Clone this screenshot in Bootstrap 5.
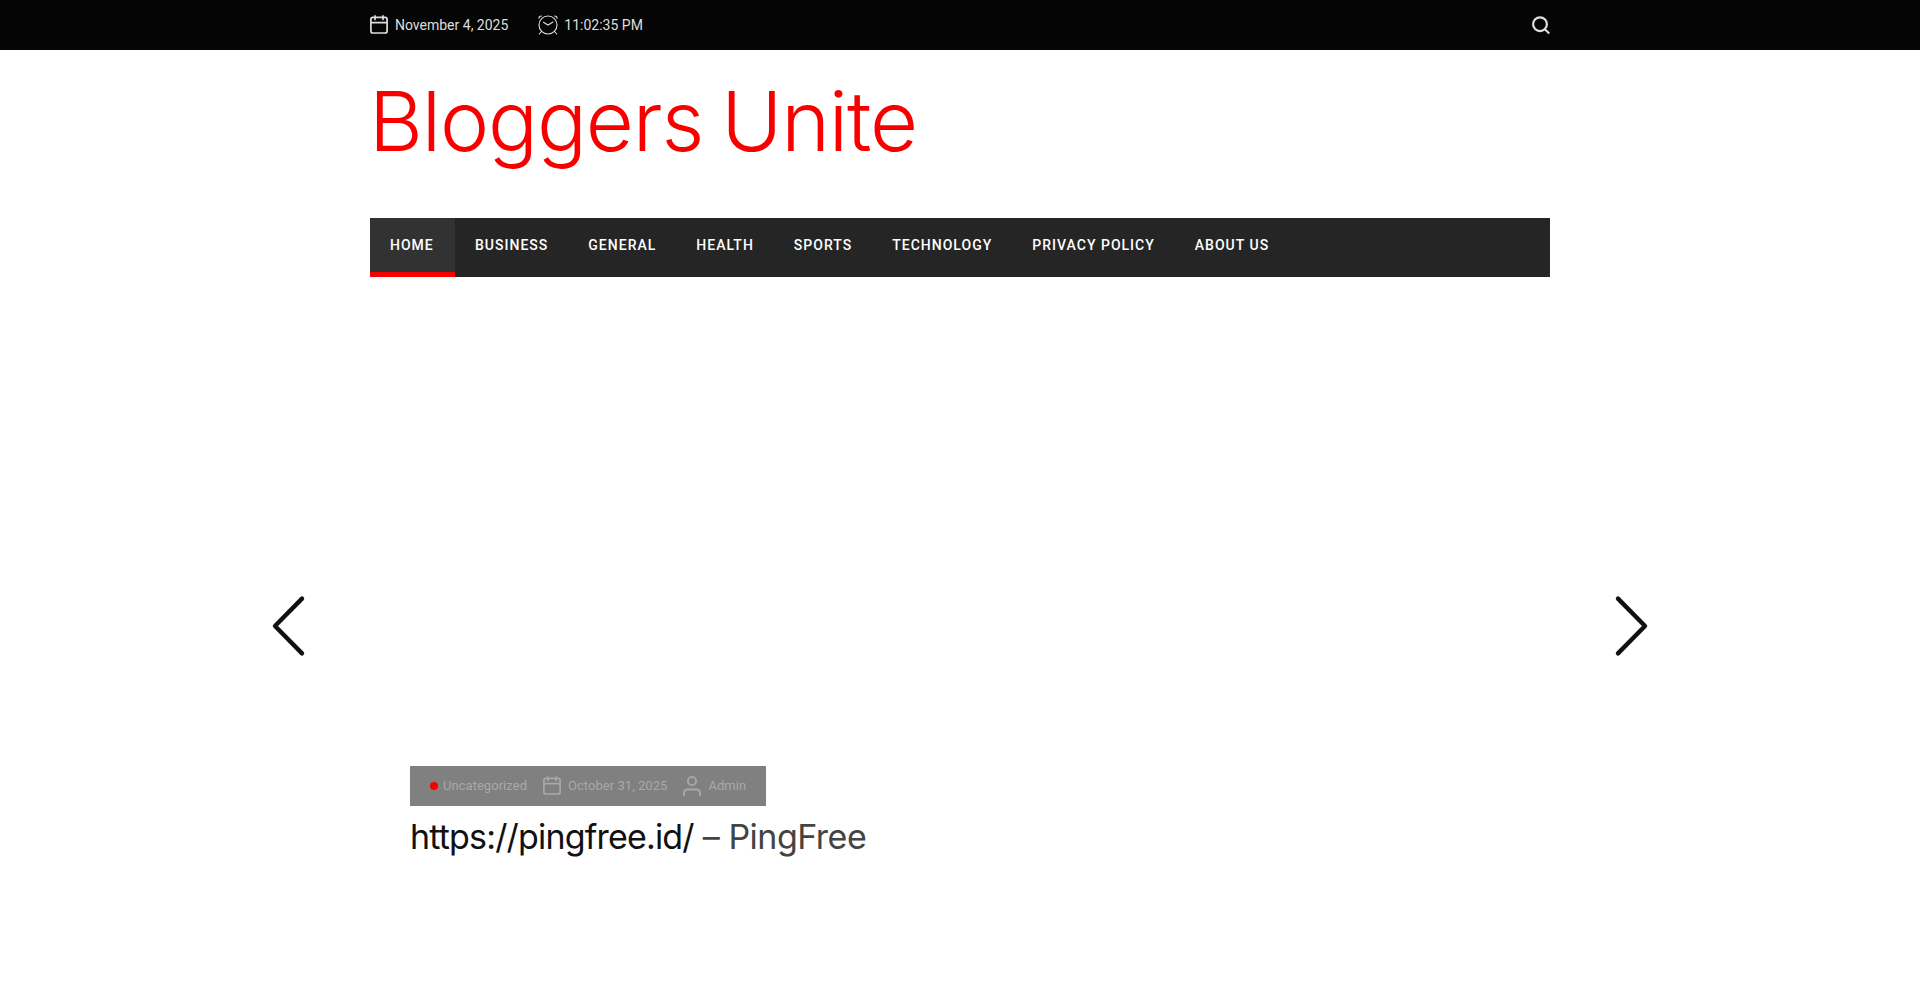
<!DOCTYPE html>
<html lang="en">
<head>
<meta charset="utf-8">
<meta name="viewport" content="width=device-width, initial-scale=1">
<title>Bloggers Unite</title>
<link href="https://cdn.jsdelivr.net/npm/bootstrap@5.3.0/dist/css/bootstrap.min.css" rel="stylesheet">
<style>
body{font-family:Roboto,sans-serif;background:#fff;color:#111;overflow:hidden}
.wrap{width:1180px;margin:0 auto}
.topbar{height:50px;background:#050505;color:#dedede;font-size:14px}
.topbar svg,.meta svg{display:block;flex:none}
.date{margin-left:7px}
.clock{margin-left:30px}
.time{margin-left:6px}
.masthead{height:168px;padding-top:14px}
.site-title{font-family:Inter,sans-serif;font-weight:300;font-size:83px;line-height:115px;letter-spacing:-1.15px;word-spacing:-4px;color:#f80000;margin:0 0 0 -1px;white-space:nowrap}
.mainnav{height:59px;background:#252525}
.mainnav .nav-link{padding:0 20px;height:59px;line-height:54px;color:#fff;font-size:14px;font-weight:500;letter-spacing:1.01px;text-transform:uppercase;white-space:nowrap}
.mainnav .active{background:#323232;border-bottom:5px solid #f80000;width:85px}
.slider{width:1380px;margin:0 auto;height:700px}
.arrow{margin-top:317px;padding:0;border:0;background:none;height:64px}
.arrow svg{display:block}
.slide{width:1180px;padding:489px 40px 0}
.meta{width:356px;height:40px;background:#808080;color:#a8a8a8;font-size:13px;padding-left:20px;white-space:nowrap;letter-spacing:.04px}
.dot{width:8px;height:8px;background:#f80000}
.cat{margin-left:5px}
.cal,.user{margin-left:16px}
.posted,.author{margin-left:7px}
.post-title{font-family:Inter,sans-serif;font-size:34px;font-weight:400;line-height:40px;margin:11px 0 0;color:#444;white-space:nowrap;letter-spacing:-.5px}
.post-title a{color:#111;letter-spacing:-.82px}
</style>
</head>
<body>
<header>
<div class="topbar">
 <div class="wrap h-100 d-flex align-items-center">
  <svg width="18" height="20" viewBox="0 0 18 20" fill="none" stroke="currentColor" stroke-width="1.7" stroke-linecap="round"><rect x=".9" y="2.4" width="16.2" height="15.6" rx="2"/><path d="M1 7.6h16M5 .9v3.6M13 .9v3.6"/></svg>
  <span class="date">November 4, 2025</span>
  <svg class="clock" width="20" height="20" viewBox="0 0 20 20" fill="none" stroke="currentColor" stroke-width="1.1" stroke-linecap="round"><circle cx="10" cy="10" r="9"/><path d="M5.5 7.3 10 10l5-3M1 3.2C1 1.8 2 1 3.3 1M19 3.2C19 1.8 18 1 16.7 1M3.5 16.5 1.2 19M16.5 16.5l2.3 2.5"/></svg>
  <span class="time">11:02:35 PM</span>
  <svg class="ms-auto" width="18" height="19" viewBox="0 0 18 19" fill="none" stroke="currentColor" stroke-width="2.2"><circle cx="8" cy="8.2" r="6.9"/><path d="m12.8 13.2 4.5 4.3"/></svg>
 </div>
</div>
<div class="wrap masthead"><h1 class="site-title">Bloggers Unite</h1></div>
<nav class="wrap mainnav nav flex-nowrap">
 <a class="nav-link active" href="#">Home</a><a class="nav-link" href="#">Business</a><a class="nav-link" href="#">General</a><a class="nav-link" href="#">Health</a><a class="nav-link" href="#">Sports</a><a class="nav-link" href="#">Technology</a><a class="nav-link" href="#">Privacy Policy</a><a class="nav-link" href="#">About Us</a>
</nav>
</header>
<main class="slider d-flex justify-content-between align-items-start">
 <button class="arrow" aria-label="Previous"><svg width="36" height="64" viewBox="0 0 36 64" fill="none" stroke="#111" stroke-width="4.4" stroke-linecap="round" stroke-linejoin="round"><path d="M32 4.600 5 32l27 27.400"/></svg></button>
 <article class="slide">
  <div class="meta d-flex align-items-center">
   <span class="dot rounded-circle"></span><span class="cat">Uncategorized</span>
   <svg class="cal" width="18" height="20" viewBox="0 0 18 20" fill="none" stroke="currentColor" stroke-width="1.7" stroke-linecap="round"><rect x=".9" y="2.4" width="16.2" height="15.6" rx="2"/><path d="M1 7.6h16M5 .9v3.6M13 .9v3.6"/></svg>
   <span class="posted">October 31, 2025</span>
   <svg class="user" width="18" height="20" viewBox="0 0 18 20" fill="none" stroke="currentColor" stroke-width="1.9"><circle cx="9" cy="5" r="4.1"/><path d="M.9 20v-2.500q0-4 4-4h8.200q4 0 4 4V20"/></svg>
   <span class="author">Admin</span>
  </div>
  <h2 class="post-title"><a class="text-decoration-none" href="#">https://pingfree.id/</a> – PingFree</h2>
 </article>
 <button class="arrow" aria-label="Next"><svg width="36" height="64" viewBox="0 0 36 64" fill="none" stroke="#111" stroke-width="4.4" stroke-linecap="round" stroke-linejoin="round"><path d="m4 4.600 27 27.400L4 59.400"/></svg></button>
</main>
<script src="https://cdn.jsdelivr.net/npm/bootstrap@5.3.0/dist/js/bootstrap.bundle.min.js"></script>
</body>
</html>
